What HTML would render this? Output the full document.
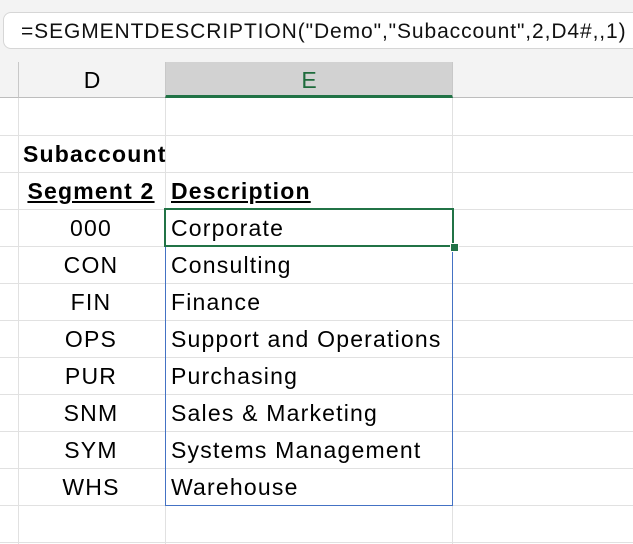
<!DOCTYPE html>
<html><head><style>
body{margin:0;width:633px;height:544px;background:#fff;font-family:"Liberation Sans",Arial,sans-serif;position:relative;overflow:hidden}
.top{position:absolute;left:0;top:0;width:633px;height:62px;background:#f3f3f3}
.fb{position:absolute;left:3px;top:12px;width:660px;height:37px;background:#fff;border:1px solid #d6d6d6;border-radius:8px;font-size:21px;letter-spacing:0.9px;line-height:37px;padding-left:17px;box-sizing:border-box;color:#111;white-space:nowrap}
.hdr{position:absolute;top:62px;height:36px;background:#f3f3f3;border-bottom:1px solid #bdbdbd;font-size:23px;line-height:36px;text-align:center;box-sizing:border-box}
.vl{position:absolute;width:1px;background:#e1e1e1}
.hl{position:absolute;left:0;width:633px;height:1px;background:#e1e1e1}
.t{position:absolute;font-size:23px;letter-spacing:1.2px;line-height:37px;color:#000;white-space:nowrap}
.c{width:148px;left:17px;text-align:center}
.e{left:171px}
</style></head><body>
<div class="top"></div>
<div class="fb">=SEGMENTDESCRIPTION("Demo","Subaccount",2,D4#,,1)</div>
<div class="hdr" style="left:0;width:18px"></div>
<div class="hdr" style="left:18px;width:147px;border-left:1px solid #c8c8c8">D</div>
<div class="hdr" style="left:165px;width:288px;background:#d2d2d2;color:#1e6b3c;border-bottom:3px solid #217346;border-left:1px solid #c8c8c8;border-right:1px solid #c8c8c8">E</div>
<div class="hdr" style="left:453px;width:180px"></div>
<div class="vl" style="left:18px;top:98px;height:446px"></div>
<div class="vl" style="left:165px;top:98px;height:446px"></div>
<div class="vl" style="left:452px;top:98px;height:446px"></div>
<div class="hl" style="top:135px"></div><div class="hl" style="top:172px"></div><div class="hl" style="top:209px"></div><div class="hl" style="top:246px"></div><div class="hl" style="top:283px"></div><div class="hl" style="top:320px"></div><div class="hl" style="top:357px"></div><div class="hl" style="top:394px"></div><div class="hl" style="top:431px"></div><div class="hl" style="top:468px"></div><div class="hl" style="top:505px"></div><div class="hl" style="top:542px"></div>
<div style="position:absolute;left:165px;top:209px;width:288px;height:297px;border:1px solid #4472c4;box-sizing:border-box;background:#fff"></div>
<div class="hl" style="left:166px;width:286px;top:283px"></div><div class="hl" style="left:166px;width:286px;top:320px"></div><div class="hl" style="left:166px;width:286px;top:357px"></div><div class="hl" style="left:166px;width:286px;top:394px"></div><div class="hl" style="left:166px;width:286px;top:431px"></div><div class="hl" style="left:166px;width:286px;top:468px"></div>
<div style="position:absolute;left:164px;top:208px;width:290px;height:39px;border:2px solid #217346;box-sizing:border-box"></div>
<div style="position:absolute;left:450px;top:243px;width:7px;height:7px;background:#217346;border:1px solid #fff"></div>
<div class="t" style="left:23px;top:136px;font-weight:bold">Subaccount</div>
<div class="t c" style="top:173px;font-weight:bold;text-decoration:underline">Segment 2</div>
<div class="t" style="left:171px;top:173px;font-weight:bold;text-decoration:underline">Description</div>
<div class="t c" style="top:210px">000</div><div class="t e" style="top:210px">Corporate</div>
<div class="t c" style="top:247px">CON</div><div class="t e" style="top:247px">Consulting</div>
<div class="t c" style="top:284px">FIN</div><div class="t e" style="top:284px">Finance</div>
<div class="t c" style="top:321px">OPS</div><div class="t e" style="top:321px">Support and Operations</div>
<div class="t c" style="top:358px">PUR</div><div class="t e" style="top:358px">Purchasing</div>
<div class="t c" style="top:395px">SNM</div><div class="t e" style="top:395px">Sales &amp; Marketing</div>
<div class="t c" style="top:432px">SYM</div><div class="t e" style="top:432px">Systems Management</div>
<div class="t c" style="top:469px">WHS</div><div class="t e" style="top:469px">Warehouse</div>
</body></html>
